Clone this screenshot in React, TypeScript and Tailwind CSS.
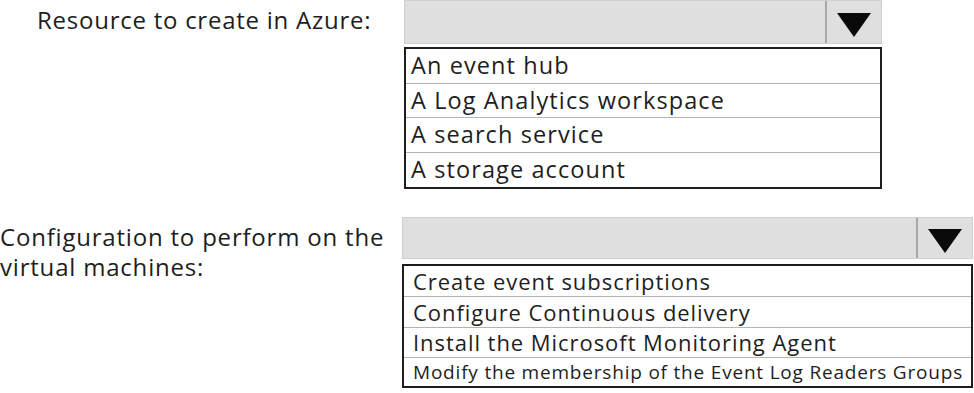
const resources = ['An event hub', 'A Log Analytics workspace', 'A search service', 'A storage account'];

const configs = [
  { label: 'Create event subscriptions', size: 'h-[31px] text-[22px] tracking-[0.95px]' },
  { label: 'Configure Continuous delivery', size: 'h-[31px] text-[22px] tracking-[0.95px]' },
  { label: 'Install the Microsoft Monitoring Agent', size: 'h-[30px] text-[22px] tracking-[0.95px]' },
  { label: 'Modify the membership of the Event Log Readers Groups', size: 'h-[28px] text-[19px] tracking-[0.8px]' },
];

function Arrow() {
  return (
    <svg width="34" height="24" viewBox="0 0 34 24" className="block">
      <polygon points="0,0 34,0 17,24" fill="#0a0a0a" />
    </svg>
  );
}

function DropBar({ height }: { height: string }) {
  return (
    <div className={`flex ${height} bg-[#dfdfdf] border border-[#d0d0d0]`}>
      <div className="flex-1" />
      <div className="w-[56px] flex items-center justify-center border-l-2 border-[#a8a8a8] pt-[5px]">
        <Arrow />
      </div>
    </div>
  );
}

export default function App() {
  return (
    <div className="w-[974px] h-[393px] bg-white text-[#1e1e1e] font-['Open_Sans','Liberation_Sans',sans-serif] overflow-hidden">
      <div className="flex">
        <div className="w-[404px] pl-[37px] pt-[5px] text-[24px] leading-[30px] tracking-[0.75px]">
          Resource to create in Azure:
        </div>
        <div className="w-[478px] flex flex-col">
          <DropBar height="h-[44px]" />
          <div className="mt-[3px] border-2 border-[#1e1e1e]">
            {resources.map((r, i) => (
              <div
                key={r}
                className={`h-[34.5px] flex items-center pl-[5px] text-[23.5px] tracking-[1.1px] ${
                  i < resources.length - 1 ? 'border-b border-[#b4b4b4]' : ''
                }`}
              >
                {r}
              </div>
            ))}
          </div>
        </div>
      </div>

      <div className="flex mt-[28px]">
        <div className="w-[402px] pt-[5px] text-[24px] leading-[30px] tracking-[0.8px]">
          Configuration to perform on the
          <br />
          virtual machines:
        </div>
        <div className="w-[571px] flex flex-col">
          <DropBar height="h-[42px]" />
          <div className="mt-[5px] border-2 border-[#1e1e1e]">
            {configs.map((c, i) => (
              <div
                key={c.label}
                className={`flex items-center pl-[9px] whitespace-nowrap ${c.size} ${
                  i < configs.length - 1 ? 'border-b border-[#b4b4b4]' : ''
                }`}
              >
                {c.label}
              </div>
            ))}
          </div>
        </div>
      </div>
    </div>
  );
}
